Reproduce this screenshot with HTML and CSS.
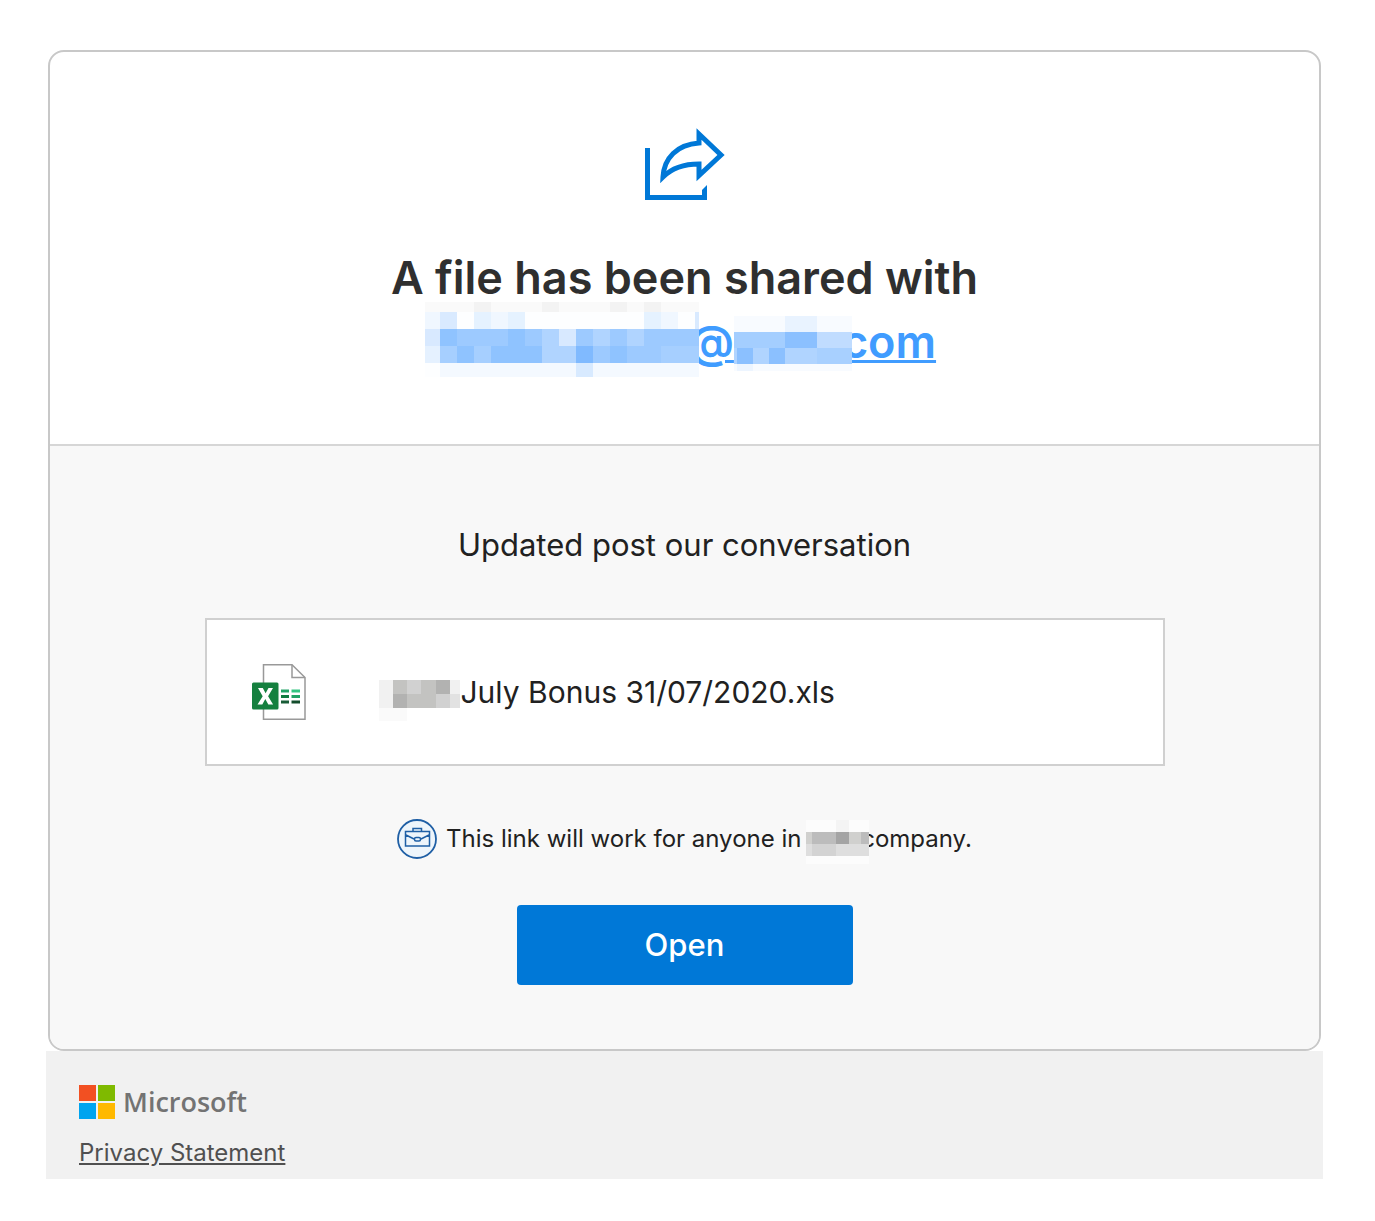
FILE: index.html
```
<!DOCTYPE html>
<html lang="en">
<head>
<meta charset="utf-8">
<meta name="viewport" content="width=device-width, initial-scale=1">
<title>A file has been shared</title>
<link rel="stylesheet" href="styles.css">
</head>
<body>
<main class="mail">
  <article class="card">
    <header class="card-head">
      <svg class="share-icon" viewBox="0 0 80 74" aria-hidden="true">
        <path d="M2.500 21V70.500H59.500V64" fill="none" stroke="#0078d7" stroke-width="5"/>
        <path d="M57 63L62 58V73H57Z" fill="#0078d7"/>
        <path d="M54 7V16C32 17.500 19 31 18 50C28 40 40 37 54 37V48.500L76 28Z" fill="none" stroke="#0078d7" stroke-width="5"/>
      </svg>
      <h1 class="title">A file has been shared with
        <a class="email" href="#"><svg class="redact-name" viewBox="0 0 274 75" shape-rendering="crispEdges" aria-hidden="true">
          <rect width="274" height="10" fill="#fafafa"/>
          <path d="M49 0h17v10h-17zM117 0h17v10h-17zM185 0h17v10h-17zM219 0h17v10h-17z" fill="#f3f3f3"/>
          <rect y="10" width="274" height="17" fill="#fdfeff"/>
          <path d="M15 10h17v17h-17z" fill="#d9eaff"/>
          <path d="M49 10h17v17h-17zM83 10h17v17h-17zM219 10h17v17h-17z" fill="#e5f2ff"/>
          <path d="M0 10h15v17h-15zM66 10h17v17h-17zM236 10h17v17h-17z" fill="#f0f7ff"/>
          <path d="M270 10h4v17h-4z" fill="#d9eaff"/>
          <rect y="27" width="274" height="34" fill="#9dcaff"/>
          <path d="M0 27h15v17h-15zM134 27h17v17h-17z" fill="#d8e9ff"/>
          <path d="M0 44h15v17h-15z" fill="#e5f1ff"/>
          <path d="M15 27h17v17h-17zM83 27h17v17h-17zM32 44h17v17h-17zM66 44h51v17h-51zM185 44h17v17h-17z" fill="#8fc3ff"/>
          <path d="M151 44h17v17h-17z" fill="#80baff"/>
          <path d="M117 27h17v34h-17zM168 27h17v17h-17zM202 27h17v17h-17zM134 44h17v17h-17z" fill="#b0d4ff"/>
          <path d="M15 44h17v17h-17zM49 44h17v17h-17zM236 44h38v17h-38z" fill="#a6cfff"/>
          <rect y="61" width="274" height="14" fill="#f4f9ff"/>
          <path d="M0 61h15v14h-15z" fill="#fdfeff"/>
          <path d="M151 61h17v14h-17z" fill="#d8eaff"/>
        </svg>@<svg class="redact-domain" viewBox="0 0 118 55" shape-rendering="crispEdges" aria-hidden="true">
          <rect width="118" height="16" fill="#f8fbff"/>
          <path d="M51 0h32v16h-32z" fill="#e9f3ff"/>
          <rect y="16" width="118" height="32" fill="#b0d4ff"/>
          <path d="M0 16h51v16h-51z" fill="#a4ceff"/>
          <path d="M51 16h32v16h-32zM3 32h16v16h-16zM35 32h16v16h-16z" fill="#8bc0ff"/>
          <path d="M83 16h35v16h-35z" fill="#c0dcff"/>
          <path d="M83 32h35v16h-35z" fill="#a8d0ff"/>
          <rect y="48" width="118" height="7" fill="#f8fbff"/>
          <path d="M3 48h16v7h-16z" fill="#edf5ff"/>
        </svg>com</a>
      </h1>
    </header>
    <section class="card-body">
      <p class="message">Updated post our conversation</p>
      <div class="file">
        <svg class="excel-icon" viewBox="0 0 54 56" aria-hidden="true">
          <path d="M11.500 .75H40L53 13.500V55.250H11.500Z" fill="#fff" stroke="#999" stroke-width="1.500"/>
          <path d="M40 .75V13.500H53" fill="none" stroke="#999" stroke-width="1.500"/>
          <path d="M29 25.500h8v3h-8z" fill="#21a366"/><path d="M39.500 25.500h8.500v3h-8.500z" fill="#33c481"/>
          <path d="M29 31h8v3h-8z" fill="#107c41"/><path d="M39.500 31h8.500v3h-8.500z" fill="#21a366"/>
          <path d="M29 36.500h8v3h-8z" fill="#185c37"/><path d="M39.500 36.500h8.500v3h-8.500z" fill="#134d2c"/>
          <rect y="18.500" width="26.500" height="27" rx="1.500" fill="#15803f"/>
          <path d="M6 24h4.800l2.800 5.200 2.900-5.200h4.500l-4.900 8.200 5 8.300h-4.800l-3-5.400-3 5.400H5.500l5.200-8.300Z" fill="#fff"/>
        </svg>
        <span class="file-name"><svg class="redact-file" viewBox="0 0 81 41" shape-rendering="crispEdges" aria-hidden="true">
          <rect width="81" height="28" fill="#c3c3c1"/>
          <path d="M0 0h14v28h-14zM71 0h10v14h-10z" fill="#f1f1f1"/>
          <path d="M28 0h14v14h-14zM57 14h14v14h-14z" fill="#d1d1d1"/>
          <path d="M57 0h14v14h-14zM14 14h14v14h-14z" fill="#b2b2b1"/>
          <path d="M71 14h10v14h-10z" fill="#e2e2e2"/>
          <path d="M0 28h28v13h-28z" fill="#fafafa"/>
        </svg>July Bonus 31/07/2020.xls</span>
      </div>
      <p class="scope">
        <svg class="scope-icon" viewBox="0 0 40 40" fill="none" stroke="#1f5fa5" aria-hidden="true">
          <circle cx="20" cy="20" r="19" fill="#eef5fb" stroke-width="1.800"/>
          <path d="M8.500 12.500h24v14.500h-24zM16 12V9.500h8.500V12M9 16l8 4M32 16l-8 4" stroke-width="1.500"/>
          <rect x="17.500" y="18.500" width="6" height="3.500" rx="1.500" stroke-width="1.500"/>
        </svg>
        <span>This link will work for anyone in <svg class="redact-org" viewBox="0 0 63 44" shape-rendering="crispEdges" aria-hidden="true">
          <rect width="63" height="44" fill="#fcfcfc"/>
          <path d="M30 0h13v12h-13z" fill="#f4f4f4"/>
          <rect y="12" width="63" height="12" fill="#bcbcbc"/>
          <path d="M0 12h6v12h-6zM43 12h12v12h-12z" fill="#d0d0ce"/>
          <path d="M30 12h13v12h-13z" fill="#a4a4a4"/>
          <rect y="24" width="63" height="12" fill="#dedede"/>
          <path d="M6 24h24v12h-24z" fill="#d3d3d3"/>
        </svg>company.</span>
      </p>
      <button class="open" type="button">Open</button>
    </section>
  </article>
  <footer class="foot">
    <div class="brand">
      <svg class="brand-mark" viewBox="0 0 36 34" aria-hidden="true">
        <path d="M0 0h17v16H0z" fill="#f25022"/><path d="M19 0h17v16H19z" fill="#7fba00"/>
        <path d="M0 18h17v16H0z" fill="#00a4ef"/><path d="M19 18h17v16H19z" fill="#ffb900"/>
      </svg>
      <span>Microsoft</span>
    </div>
    <a class="privacy" href="#">Privacy Statement</a>
  </footer>
</main>
</body>
</html>
```
FILE: styles.css
```
* { box-sizing: border-box; }

body {
  margin: 0;
  background: #fff;
  color: #212121;
  font-family: Inter, "Liberation Sans", sans-serif;
}

.mail { padding: 50px 52px 44px 46px; }

.card {
  margin: 0 2px;
  border: 2px solid #c8c8c8;
  border-radius: 16px;
  overflow: hidden;
}

.card-head {
  display: flex;
  flex-direction: column;
  align-items: center;
  padding: 75px 24px 70px;
  border-bottom: 2px solid #d6d6d6;
}

.share-icon { width: 80px; height: 74px; }

.title {
  margin: 45px 0 0;
  color: #2f2f2f;
  font-size: 45px;
  font-weight: 600;
  line-height: 64px;
  text-align: center;
}

.email {
  display: block;
  padding-right: 8px;
  color: #409cff;
  text-decoration-thickness: 3px;
  white-space: nowrap;
}

.title svg, .file-name svg, .scope svg { vertical-align: middle; }

.redact-name { width: 274px; height: 75px; margin: -24px -10px -12px 0; position: relative; }
.redact-domain { width: 118px; height: 55px; margin: -4px -10px 0 0; position: relative; }

.card-body {
  display: flex;
  flex-direction: column;
  align-items: center;
  padding: 78px 24px 64px;
  background: #f8f8f8;
}

.message {
  margin: 0 0 52px;
  font-size: 31px;
  line-height: 42px;
}

.file {
  display: flex;
  align-items: center;
  gap: 73px;
  width: 100%;
  max-width: 960px;
  min-height: 148px;
  padding: 0 45px;
  border: 2px solid #d0d0d0;
  background: #fff;
}

.excel-icon { width: 54px; height: 56px; }
.file-name { font-size: 30px; line-height: 42px; }
.redact-file { width: 81px; height: 41px; margin: 2px 1px -10px 0; }

.scope {
  display: flex;
  align-items: center;
  gap: 9px;
  margin: 51px 0 44px;
  font-size: 24px;
  line-height: 44px;
}

.scope-icon { width: 40px; height: 40px; }
.redact-org { width: 63px; height: 44px; margin: 0 -8px -4px -2px; position: relative; }

.open {
  width: 336px;
  height: 80px;
  border: 0;
  border-radius: 4px;
  background: #0078d7;
  color: #fff;
  font: 500 31px/40px Inter, "Liberation Sans", sans-serif;
}

.foot {
  padding: 34px 33px 8px;
  background: #f1f1f1;
  color: #505050;
}

.brand {
  display: flex;
  align-items: center;
  gap: 8px;
  height: 34px;
  margin-bottom: 16px;
  color: #737373;
  font: 600 27px/34px "Open Sans", "Noto Sans", sans-serif;
}

.brand-mark { width: 36px; height: 34px; }

.privacy {
  display: inline-block;
  color: #505050;
  font-size: 24px;
  line-height: 36px;
}
```
